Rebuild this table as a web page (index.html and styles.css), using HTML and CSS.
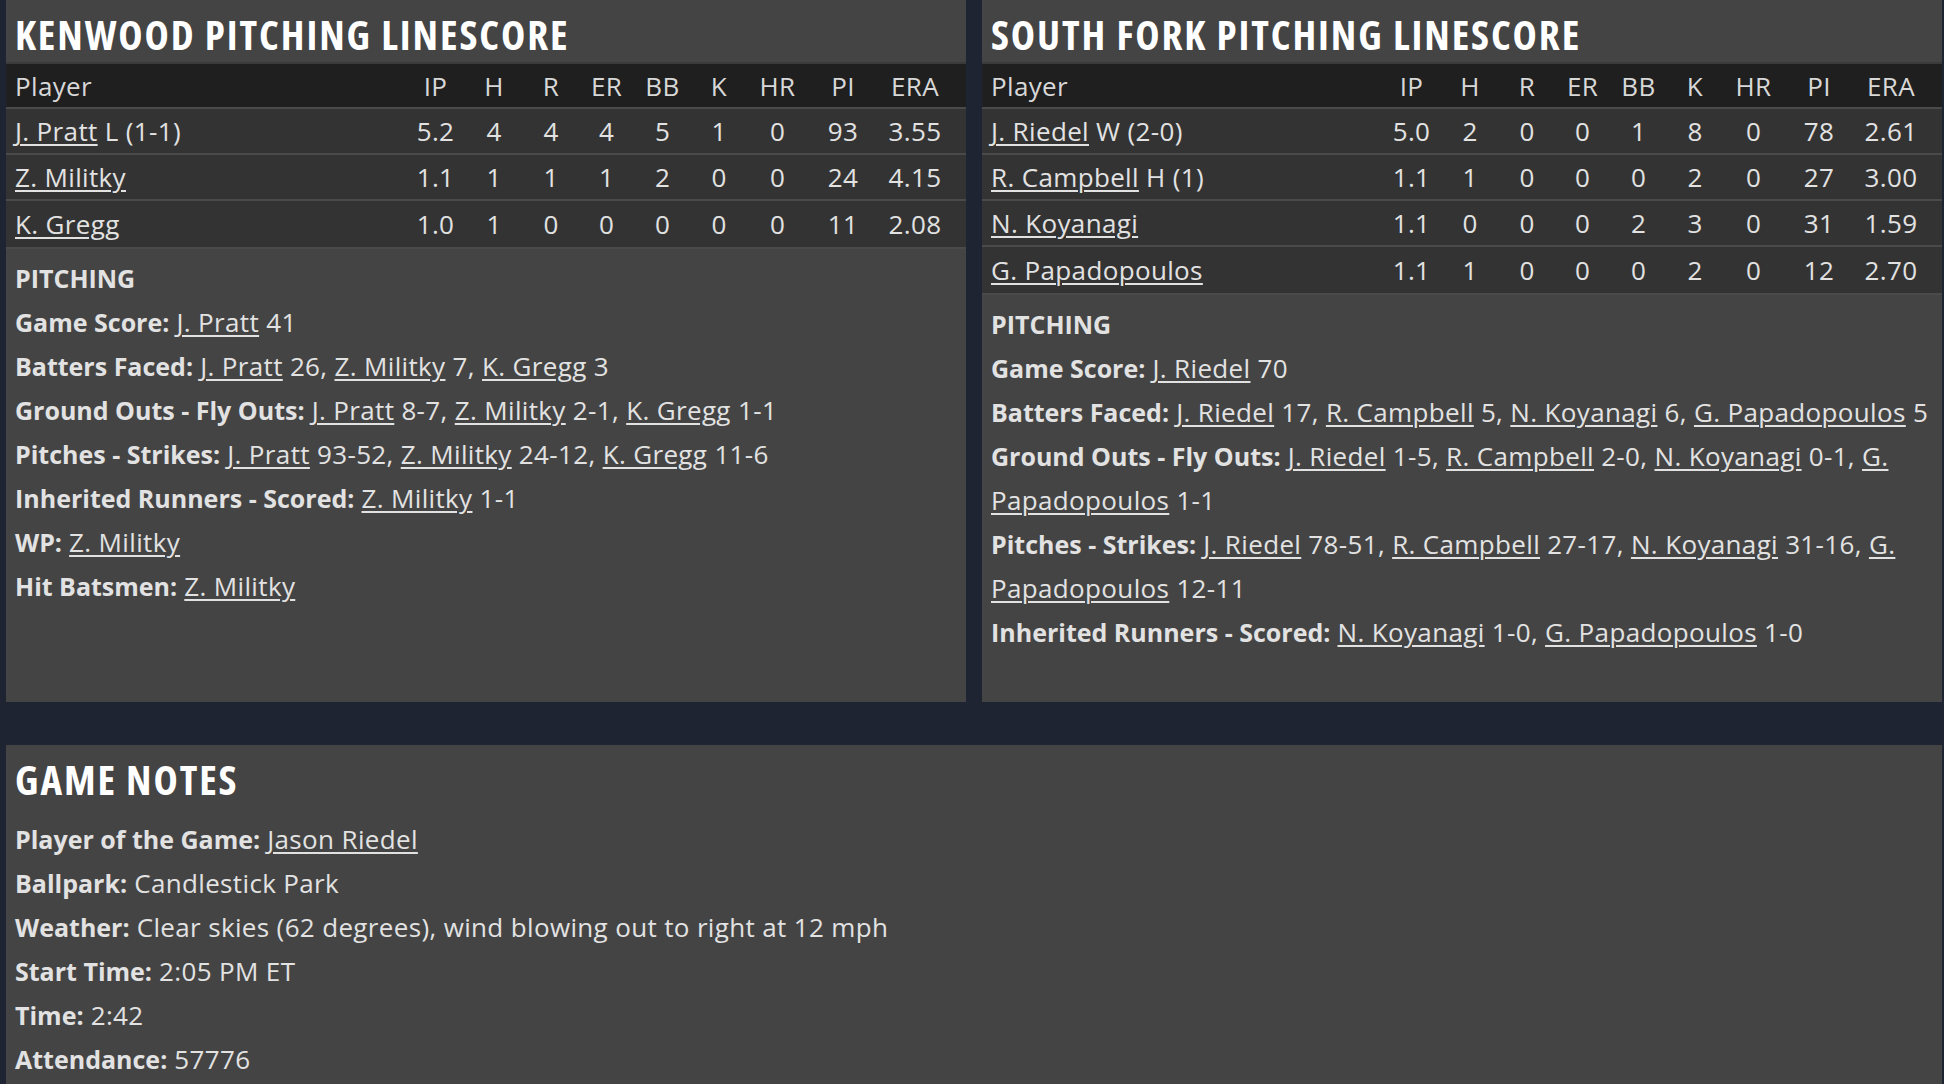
FILE: index.html
```html
<!DOCTYPE html>
<html lang="en">
<head>
<meta charset="utf-8">
<title>Box Score – Pitching</title>
<link rel="stylesheet" href="styles.css">
</head>
<body>

<div class="page">

  <!-- PITCHING LINESCORES -->
  <div class="top-row">

    <section class="panel">
      <h2 class="panel-title">KENWOOD PITCHING LINESCORE</h2>
      <table class="linescore">
        <colgroup>
          <col><col class="c-ip"><col class="c-h"><col class="c-r"><col class="c-er"><col class="c-bb"><col class="c-k"><col class="c-hr"><col class="c-pi"><col class="c-era">
        </colgroup>
        <thead>
          <tr><th>Player</th><th>IP</th><th>H</th><th>R</th><th>ER</th><th>BB</th><th>K</th><th>HR</th><th>PI</th><th>ERA</th></tr>
        </thead>
        <tbody>
          <tr><td><a href="#">J. Pratt</a> L (1-1)</td><td>5.2</td><td>4</td><td>4</td><td>4</td><td>5</td><td>1</td><td>0</td><td>93</td><td>3.55</td></tr>
          <tr><td><a href="#">Z. Militky</a></td><td>1.1</td><td>1</td><td>1</td><td>1</td><td>2</td><td>0</td><td>0</td><td>24</td><td>4.15</td></tr>
          <tr><td><a href="#">K. Gregg</a></td><td>1.0</td><td>1</td><td>0</td><td>0</td><td>0</td><td>0</td><td>0</td><td>11</td><td>2.08</td></tr>
        </tbody>
      </table>
      <div class="notes">
        <h3>PITCHING</h3>
        <p><b>Game Score:</b> <a href="#">J. Pratt</a> 41</p>
        <p><b>Batters Faced:</b> <a href="#">J. Pratt</a> 26, <a href="#">Z. Militky</a> 7, <a href="#">K. Gregg</a> 3</p>
        <p><b>Ground Outs - Fly Outs:</b> <a href="#">J. Pratt</a> 8-7, <a href="#">Z. Militky</a> 2-1, <a href="#">K. Gregg</a> 1-1</p>
        <p><b>Pitches - Strikes:</b> <a href="#">J. Pratt</a> 93-52, <a href="#">Z. Militky</a> 24-12, <a href="#">K. Gregg</a> 11-6</p>
        <p><b>Inherited Runners - Scored:</b> <a href="#">Z. Militky</a> 1-1</p>
        <p><b>WP:</b> <a href="#">Z. Militky</a></p>
        <p><b>Hit Batsmen:</b> <a href="#">Z. Militky</a></p>
      </div>
    </section>

    <section class="panel">
      <h2 class="panel-title">SOUTH FORK PITCHING LINESCORE</h2>
      <table class="linescore">
        <colgroup>
          <col><col class="c-ip"><col class="c-h"><col class="c-r"><col class="c-er"><col class="c-bb"><col class="c-k"><col class="c-hr"><col class="c-pi"><col class="c-era">
        </colgroup>
        <thead>
          <tr><th>Player</th><th>IP</th><th>H</th><th>R</th><th>ER</th><th>BB</th><th>K</th><th>HR</th><th>PI</th><th>ERA</th></tr>
        </thead>
        <tbody>
          <tr><td><a href="#">J. Riedel</a> W (2-0)</td><td>5.0</td><td>2</td><td>0</td><td>0</td><td>1</td><td>8</td><td>0</td><td>78</td><td>2.61</td></tr>
          <tr><td><a href="#">R. Campbell</a> H (1)</td><td>1.1</td><td>1</td><td>0</td><td>0</td><td>0</td><td>2</td><td>0</td><td>27</td><td>3.00</td></tr>
          <tr><td><a href="#">N. Koyanagi</a></td><td>1.1</td><td>0</td><td>0</td><td>0</td><td>2</td><td>3</td><td>0</td><td>31</td><td>1.59</td></tr>
          <tr><td><a href="#">G. Papadopoulos</a></td><td>1.1</td><td>1</td><td>0</td><td>0</td><td>0</td><td>2</td><td>0</td><td>12</td><td>2.70</td></tr>
        </tbody>
      </table>
      <div class="notes">
        <h3>PITCHING</h3>
        <p><b>Game Score:</b> <a href="#">J. Riedel</a> 70</p>
        <p><b>Batters Faced:</b> <a href="#">J. Riedel</a> 17, <a href="#">R. Campbell</a> 5, <a href="#">N. Koyanagi</a> 6, <a href="#">G. Papadopoulos</a> 5</p>
        <p><b>Ground Outs - Fly Outs:</b> <a href="#">J. Riedel</a> 1-5, <a href="#">R. Campbell</a> 2-0, <a href="#">N. Koyanagi</a> 0-1, <a href="#">G. Papadopoulos</a> 1-1</p>
        <p><b>Pitches - Strikes:</b> <a href="#">J. Riedel</a> 78-51, <a href="#">R. Campbell</a> 27-17, <a href="#">N. Koyanagi</a> 31-16, <a href="#">G. Papadopoulos</a> 12-11</p>
        <p><b>Inherited Runners - Scored:</b> <a href="#">N. Koyanagi</a> 1-0, <a href="#">G. Papadopoulos</a> 1-0</p>
      </div>
    </section>

  </div>

  <!-- GAME NOTES -->
  <section class="panel game-notes">
    <h2 class="panel-title">GAME NOTES</h2>
    <div class="notes">
      <p><b>Player of the Game:</b> <a href="#">Jason Riedel</a></p>
      <p><b>Ballpark:</b> Candlestick Park</p>
      <p><b>Weather:</b> Clear skies (62 degrees), wind blowing out to right at 12 mph</p>
      <p><b>Start Time:</b> 2:05 PM ET</p>
      <p><b>Time:</b> 2:42</p>
      <p><b>Attendance:</b> 57776</p>
    </div>
  </section>

</div>

</body>
</html>
```

FILE: styles.css
```css
:root{
  --page:#1e2431;
  --panel:#444;
  --head:#1f1f1f;
  --row:#333;
  --text:#e2e2e2;
}
*{box-sizing:border-box;margin:0;padding:0}
body{
  font-family:"Open Sans",Lato,sans-serif;font-size:26px;letter-spacing:.35px;
  background:var(--page);color:var(--text);overflow:hidden
}
a{color:inherit;text-decoration:underline;text-underline-offset:3px;text-decoration-thickness:2px}
b{font-weight:700;font-size:25px;letter-spacing:0}

/* ---------- LAYOUT ---------- */
.page{padding:0 2px 0 6px}
.top-row{display:flex;gap:16px;height:702px}
.panel{flex:1;background:var(--panel)}
.game-notes{margin-top:43px;min-height:400px}

/* ---------- PANEL TITLES ---------- */
.panel-title{
  font-size:41px;font-weight:700;font-stretch:75%;color:#fff;letter-spacing:1.9px;
  line-height:56px;padding:6px 9px 0;height:62px;white-space:nowrap
}

/* ---------- LINESCORE TABLE ---------- */
.linescore{width:100%;border-collapse:collapse;table-layout:fixed;border-top:2px solid #3a3a3a}
.linescore th,.linescore td{text-align:center;white-space:nowrap;padding:0}
.linescore th{background:var(--head);height:45px;font-weight:400;color:#d8d8d8}
.linescore td{background:var(--row);height:46px;border-top:2px solid #4a4a4a}
.linescore tbody tr:last-child td{border-bottom:2px solid #4a4a4a;height:48px}
.linescore th:first-child,.linescore td:first-child{text-align:left;padding-left:9px}
.linescore th:last-child,.linescore td:last-child{padding-right:14px}
.c-ip{width:59px}.c-h{width:58px}.c-r{width:56px}.c-er{width:55px}.c-bb{width:57px}
.c-k{width:56px}.c-hr{width:61px}.c-pi{width:70px}.c-era{width:88px}

/* ---------- NOTES ---------- */
.notes{padding:7px 4px 7px 9px;line-height:44px}
.notes h3{font-size:25px;font-weight:700;line-height:44px;letter-spacing:0}
.game-notes .notes{padding-top:10px}
```
